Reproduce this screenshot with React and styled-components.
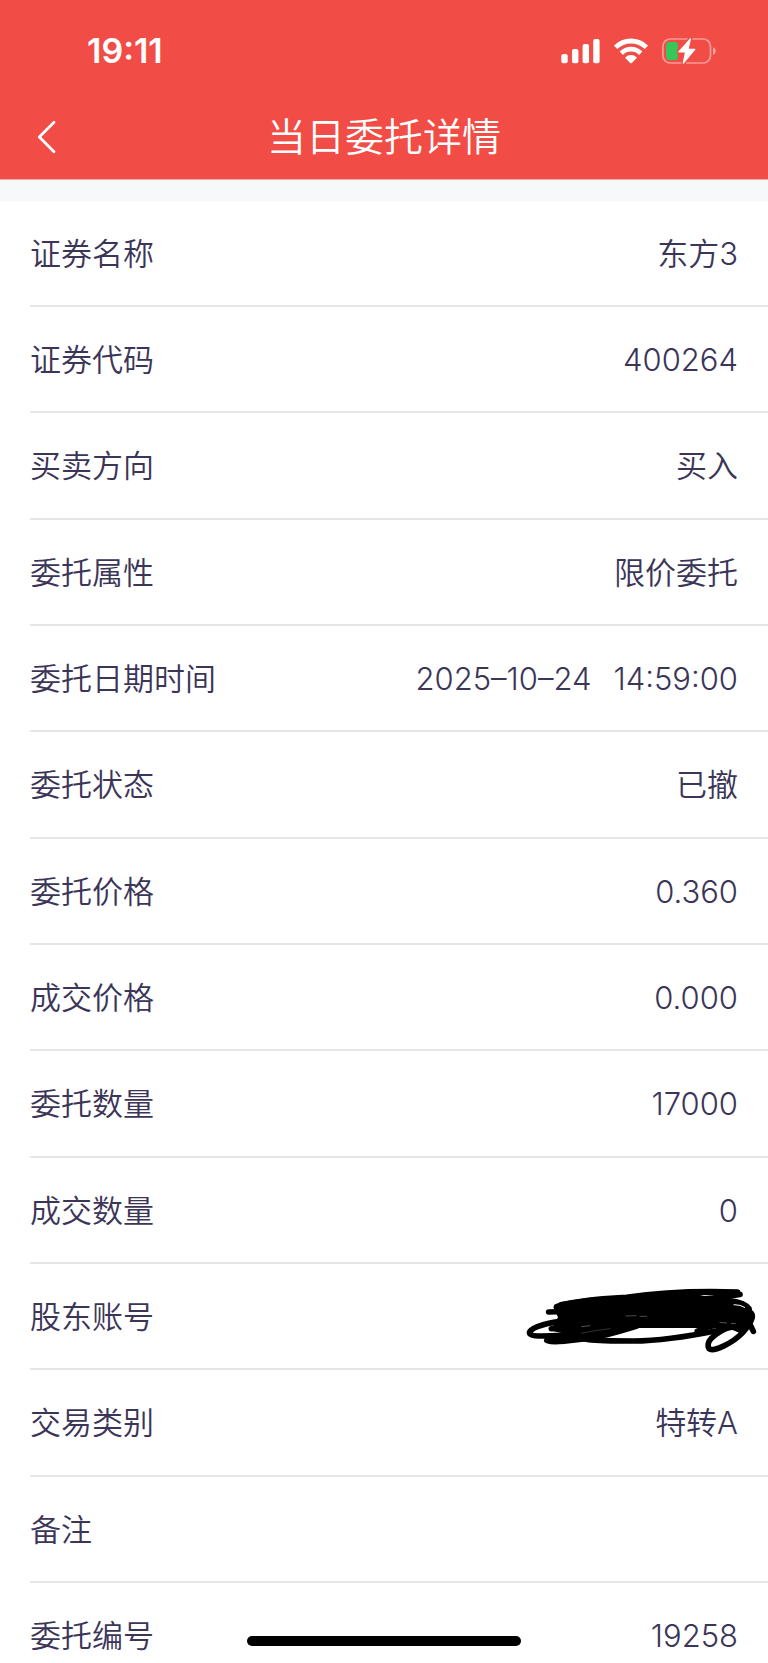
import React from 'react';
import styled, { createGlobalStyle } from 'styled-components';

const GlobalStyle = createGlobalStyle`
  *, *::before, *::after { box-sizing: border-box; }
  body {
    margin: 0;
    background: #ffffff;
    color: #3b3558;
    font-family: Inter, "Noto Sans CJK SC", sans-serif;
  }
`;

const Screen = styled.div`
  position: relative;
  display: flex;
  flex-direction: column;
  height: 100vh;
  overflow: hidden;
`;

const Header = styled.header`
  flex: none;
  background: #f14c46;
  border-bottom: 1px solid #e9aeac;
  color: #ffffff;
`;

const StatusBar = styled.div`
  display: flex;
  align-items: center;
  justify-content: space-between;
  height: 94px;
  padding: 8px 52px 0 87px;
`;

const Clock = styled.time`
  font-size: 34px;
  line-height: 40px;
  font-weight: 600;
`;

const StatusIcons = styled.div`
  display: flex;
  align-items: center;
  gap: 14px;

  svg { display: block; }
`;

const NavBar = styled.div`
  display: grid;
  grid-template-columns: 92px 1fr 92px;
  align-items: center;
  height: 85px;
`;

const BackButton = styled.button`
  display: flex;
  align-items: center;
  height: 85px;
  padding: 0 0 0 36px;
  border: 0;
  background: none;
  color: inherit;
  cursor: pointer;
`;

const Title = styled.h1`
  margin: 0;
  font-size: 39px;
  line-height: 56px;
  font-weight: 350;
  text-align: center;
`;

const Content = styled.main`
  flex: 1;
  min-height: 0;
  overflow-y: auto;
  scrollbar-width: none;
  border-top: 21px solid #f6f8fa;
`;

const DetailList = styled.dl`
  margin: 0;
  padding-left: 30px;
`;

const Row = styled.div`
  position: relative;
  display: flex;
  align-items: center;
  justify-content: space-between;
  height: 106px;
  padding: 1px 30px 0 0;
  border-bottom: 2px solid #e6e6e6;
  font-size: 31px;
  line-height: 44px;
  font-weight: 350;

  &:nth-child(3n) { height: 107px; }
`;

const Label = styled.dt`
  white-space: nowrap;
`;

const Value = styled.dd`
  display: flex;
  gap: 22px;
  margin: 0;
  white-space: nowrap;
`;

const Scribble = styled.svg`
  position: absolute;
  top: 6px;
  right: 0;
`;

const HomeIndicator = styled.div`
  position: absolute;
  left: 50%;
  bottom: 17px;
  width: 274px;
  height: 10px;
  border-radius: 5px;
  background: #000000;
  transform: translateX(-50%);
`;

const SignalIcon = () => (
  <svg width="39" height="26" viewBox="0 0 39 26" fill="currentColor" aria-hidden="true">
    <rect x="0.3" y="16" width="6.4" height="9.3" rx="2" />
    <rect x="11" y="11" width="6.4" height="14.3" rx="2" />
    <rect x="21.6" y="6" width="6.4" height="19.3" rx="2" />
    <rect x="32.2" y="1" width="6.4" height="24.3" rx="2" />
  </svg>
);

const WifiIcon = () => (
  <svg width="34" height="26" viewBox="0 0 34 26" aria-hidden="true">
    <g fill="none" stroke="currentColor" strokeWidth="4.8">
      <path d="M1.6 9.3A22 22 0 0 1 32.4 9.3" />
      <path d="M7.3 15.2A13.8 13.8 0 0 1 26.7 15.2" />
    </g>
    <path fill="currentColor" d="M11.4 19.2A8 8 0 0 1 22.6 19.2Q23 19.7 22.5 20.2L17.8 25Q17 25.7 16.2 25L11.5 20.2Q11 19.7 11.4 19.2Z" />
  </svg>
);

const BatteryIcon = () => (
  <svg width="54" height="26" viewBox="0 0 54 26" aria-hidden="true">
    <rect x="0.9" y="1" width="47.6" height="24" rx="7.5" fill="none" stroke="#ffffff" strokeOpacity="0.45" strokeWidth="1.7" />
    <path d="M51 9.2C54.6 10.6 54.6 15.4 51 16.8Z" fill="#ffffff" fillOpacity="0.5" />
    <path d="M8 4H14.5Q16 5.5 16 9Q14 13 16 17Q16 20.5 14.5 22H8Q4 22 4 18V8Q4 4 8 4Z" fill="#34c759" />
    <path d="M28.4 0.9L16.8 13.9H23.6L21.3 25.2L32.8 11.4H26Z" fill="#f14c46" stroke="#f14c46" strokeWidth="4" strokeLinejoin="round" />
    <path d="M28.4 0.9L16.8 13.9H23.6L21.3 25.2L32.8 11.4H26Z" fill="#ffffff" stroke="#ffffff" strokeWidth="1.2" strokeLinejoin="round" />
  </svg>
);

const BackIcon = () => (
  <svg width="22" height="34" viewBox="0 0 22 34" fill="none" stroke="currentColor" strokeWidth="2.8" strokeLinecap="round" strokeLinejoin="round" aria-hidden="true">
    <path d="M18 2.2L3.3 17L18 31.8" />
  </svg>
);

const Redaction = () => (
  <Scribble width="258" height="100" viewBox="0 0 774 300" role="img" aria-label="已涂抹">
    <path
      fill="#000000"
      d="M130 112L150 96L250 82L350 76L470 64L600 60L688 60L690 72L650 74L570 76L600 82L650 86L700 94L722 112L732 140L724 166L690 188L650 174L560 174L384 174L330 190L240 214L200 214L180 194L122 182L144 142Z"
    />
    <g fill="none" stroke="#000000" strokeWidth="17" strokeLinecap="round" strokeLinejoin="round">
      <path d="M682 66C560 62 430 70 350 82C270 86 190 92 140 110" />
      <path d="M690 73C620 84 580 88 540 90" />
      <path d="M116 126L250 122" />
      <path d="M150 154C100 160 50 178 60 192C68 204 150 194 190 196C250 190 310 174 380 164" />
      <path d="M124 176L200 160" />
      <path d="M190 196C150 200 110 202 110 212C112 220 200 212 250 202C300 194 340 180 380 168" />
      <path d="M200 190C200 210 240 213 370 213C450 212 530 200 620 182C660 172 690 168 700 160" />
      <path d="M562 184C590 168 640 160 700 156" />
      <path d="M650 92C690 94 722 108 718 126C736 132 726 156 698 188C670 218 610 248 597 236C586 216 608 196 646 176" />
      <path d="M650 110C700 116 714 150 730 184" />
      <path d="M640 150L690 180" />
    </g>
    <g fill="none" stroke="#ffffff" strokeWidth="2" strokeLinecap="round">
      <path d="M348 138L378 137M390 139L410 139" opacity="0.45" />
      <path d="M215 170L240 167M630 157L650 159M664 160L676 161" opacity="0.5" />
      <path d="M214 190C240 184 270 180 300 176" opacity="0.3" />
      <path d="M672 104Q692 104 704 112" strokeWidth="3" />
    </g>
  </Scribble>
);

const details = [
  { label: '证券名称', value: '东方3' },
  { label: '证券代码', value: '400264' },
  { label: '买卖方向', value: '买入' },
  { label: '委托属性', value: '限价委托' },
  {
    label: '委托日期时间',
    value: (
      <>
        <span>2025–10–24</span>
        <span>14:59:00</span>
      </>
    ),
  },
  { label: '委托状态', value: '已撤' },
  { label: '委托价格', value: '0.360' },
  { label: '成交价格', value: '0.000' },
  { label: '委托数量', value: '17000' },
  { label: '成交数量', value: '0' },
  { label: '股东账号', value: <Redaction /> },
  { label: '交易类别', value: '特转A' },
  { label: '备注', value: '' },
  { label: '委托编号', value: '19258' },
];

export default function App() {
  return (
    <Screen>
      <GlobalStyle />
      <Header>
        <StatusBar>
          <Clock>19:11</Clock>
          <StatusIcons>
            <SignalIcon />
            <WifiIcon />
            <BatteryIcon />
          </StatusIcons>
        </StatusBar>
        <NavBar>
          <BackButton type="button" aria-label="返回">
            <BackIcon />
          </BackButton>
          <Title>当日委托详情</Title>
        </NavBar>
      </Header>
      <Content>
        <DetailList>
          {details.map(({ label, value }) => (
            <Row key={label}>
              <Label>{label}</Label>
              <Value>{value}</Value>
            </Row>
          ))}
        </DetailList>
      </Content>
      <HomeIndicator />
    </Screen>
  );
}
